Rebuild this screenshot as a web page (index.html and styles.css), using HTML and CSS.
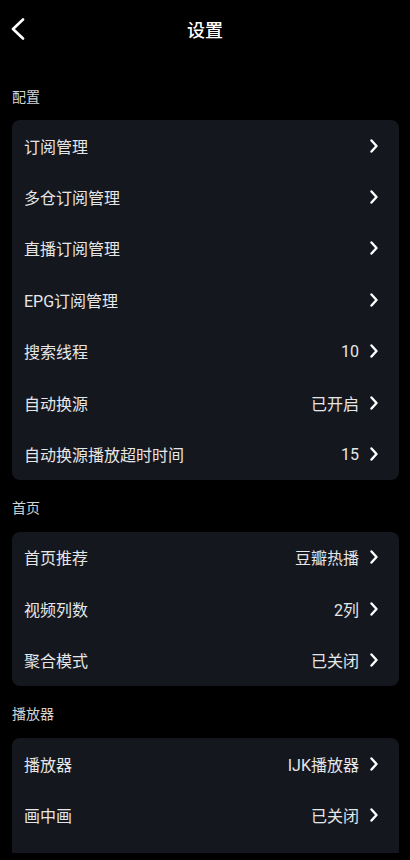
FILE: index.html
```html
<!DOCTYPE html>
<html lang="zh-CN">
<head>
    <meta charset="UTF-8">
    <meta name="viewport" content="width=device-width, initial-scale=1.0">
    <title>设置</title>
    <link rel="stylesheet" href="styles.css">
</head>
<body>
    <div class="screen">
        <div class="header">
            <div class="back">
                <svg width="14" height="22" viewBox="0 0 14 22"><polyline points="12,1.5 2,11 12,20.5" fill="none" stroke="#fff" stroke-width="2.6" stroke-linecap="round" stroke-linejoin="round"/></svg>
            </div>
            <div class="title">设置</div>
            <div></div>
        </div>

        <div class="content">
            <!-- 配置 -->
            <div class="group">
                <div class="group-title">配置</div>
                <div class="card">
                    <div class="row"><span class="label">订阅管理</span><span class="value"><svg class="arrow" width="8" height="14" viewBox="0 0 8 14"><polyline points="1.5,1.5 6.5,7 1.5,12.5"/></svg></span></div>
                    <div class="row"><span class="label">多仓订阅管理</span><span class="value"><svg class="arrow" width="8" height="14" viewBox="0 0 8 14"><polyline points="1.5,1.5 6.5,7 1.5,12.5"/></svg></span></div>
                    <div class="row"><span class="label">直播订阅管理</span><span class="value"><svg class="arrow" width="8" height="14" viewBox="0 0 8 14"><polyline points="1.5,1.5 6.5,7 1.5,12.5"/></svg></span></div>
                    <div class="row"><span class="label">EPG订阅管理</span><span class="value"><svg class="arrow" width="8" height="14" viewBox="0 0 8 14"><polyline points="1.5,1.5 6.5,7 1.5,12.5"/></svg></span></div>
                    <div class="row"><span class="label">搜索线程</span><span class="value">10<svg class="arrow" width="8" height="14" viewBox="0 0 8 14"><polyline points="1.5,1.5 6.5,7 1.5,12.5"/></svg></span></div>
                    <div class="row"><span class="label">自动换源</span><span class="value">已开启<svg class="arrow" width="8" height="14" viewBox="0 0 8 14"><polyline points="1.5,1.5 6.5,7 1.5,12.5"/></svg></span></div>
                    <div class="row"><span class="label">自动换源播放超时时间</span><span class="value">15<svg class="arrow" width="8" height="14" viewBox="0 0 8 14"><polyline points="1.5,1.5 6.5,7 1.5,12.5"/></svg></span></div>
                </div>
            </div>

            <!-- 首页 -->
            <div class="group">
                <div class="group-title">首页</div>
                <div class="card">
                    <div class="row"><span class="label">首页推荐</span><span class="value">豆瓣热播<svg class="arrow" width="8" height="14" viewBox="0 0 8 14"><polyline points="1.5,1.5 6.5,7 1.5,12.5"/></svg></span></div>
                    <div class="row"><span class="label">视频列数</span><span class="value">2列<svg class="arrow" width="8" height="14" viewBox="0 0 8 14"><polyline points="1.5,1.5 6.5,7 1.5,12.5"/></svg></span></div>
                    <div class="row"><span class="label">聚合模式</span><span class="value">已关闭<svg class="arrow" width="8" height="14" viewBox="0 0 8 14"><polyline points="1.5,1.5 6.5,7 1.5,12.5"/></svg></span></div>
                </div>
            </div>

            <!-- 播放器 -->
            <div class="group">
                <div class="group-title">播放器</div>
                <div class="card card-open">
                    <div class="row"><span class="label">播放器</span><span class="value">IJK播放器<svg class="arrow" width="8" height="14" viewBox="0 0 8 14"><polyline points="1.5,1.5 6.5,7 1.5,12.5"/></svg></span></div>
                    <div class="row"><span class="label">画中画</span><span class="value">已关闭<svg class="arrow" width="8" height="14" viewBox="0 0 8 14"><polyline points="1.5,1.5 6.5,7 1.5,12.5"/></svg></span></div>
                </div>
            </div>
        </div>
    </div>
</body>
</html>
```

FILE: styles.css
```css
html,body{
    margin: 0;
    padding: 0;
    background-color: #000;
}
body{
    font-family: Roboto, "Noto Sans CJK SC", sans-serif;
    color: #e6e6e6;
}
.screen{
    height: 853px;
    overflow: hidden;
}
.header{
    height: 58px;
    display: grid;
    grid-template-columns: 48px 1fr 48px;
    align-items: center;
}
.back{
    padding-left: 11px;
    display: flex;
    align-items: center;
}
.title{
    text-align: center;
    font-size: 18px;
    font-weight: 500;
    color: #fff;
}
.content{
    padding-top: 10px;
}
.group{
    margin-top: 3px;
}
.group-title{
    height: 49px;
    display: flex;
    align-items: center;
    padding-left: 12px;
    font-size: 14px;
    color: #d4d4d4;
}
.card{
    margin: 0 11px 0 12px;
    background-color: #15171f;
    border-radius: 8px;
}
.card-open{
    padding-bottom: 20px;
    border-radius: 8px 8px 0 0;
}
.row{
    height: 51.4px;
    display: flex;
    align-items: center;
    justify-content: space-between;
    padding: 0 21px 0 12px;
    font-size: 16px;
}
.value{
    display: flex;
    align-items: center;
    gap: 11px;
}
.arrow{
    fill: none;
    stroke: #fff;
    stroke-width: 2.4;
    stroke-linecap: round;
    stroke-linejoin: round;
}
```
